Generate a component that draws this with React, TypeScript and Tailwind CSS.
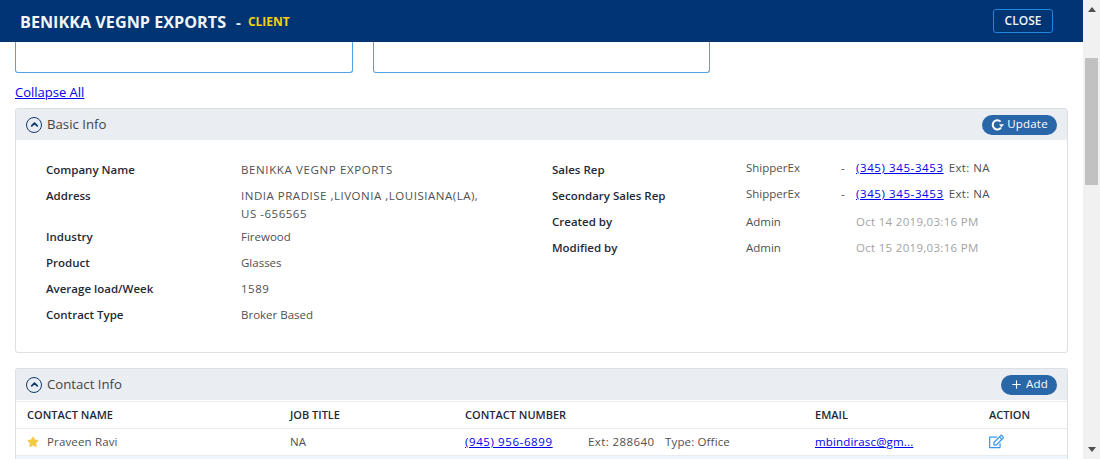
import { ChevronUp, Plus, Star } from "lucide-react";
import { ReactNode } from "react";
import { FaRegEdit } from "react-icons/fa";

const Label = ({ children }: { children: ReactNode }) => (
  <div className="w-[194px] shrink-0 font-semibold text-[#1f2a37]">{children}</div>
);

const Phone = () => (
  <>
    <span className="w-[15px] shrink-0">-</span>
    <a href="#" className="mr-[5px] shrink-0 tracking-[0.6px] text-[#0000ee] underline">
      (345) 345-3453
    </a>
    <span className="tracking-[0.4px]">Ext: NA</span>
  </>
);

const CardHeader = ({ title, action }: { title: string; action: ReactNode }) => (
  <div className="flex h-[31px] items-center justify-between bg-[#eaedf2] pl-[10px] pr-[10px]">
    <div className="flex items-center gap-[5px]">
      <span className="flex h-4 w-4 items-center justify-center rounded-full border-[1.5px] border-[#0f3a6b]">
        <ChevronUp size={11} strokeWidth={4} className="text-[#0f3a6b]" />
      </span>
      <span className="-translate-y-px text-[13.2px] text-[#444]">{title}</span>
    </div>
    {action}
  </div>
);

// open ring with the arrowhead pointing down on its right side
const RedoIcon = () => (
  <svg width="13" height="12" viewBox="0 0 13 12" fill="none">
    <path d="M9.6 2.6A4.6 4.6 0 1 0 10 8.6" stroke="white" strokeWidth="2" />
    <path d="M8 5.2h5L10.5 8.4z" fill="white" />
  </svg>
);

const leftRows = [
  { label: "Company Name", value: "BENIKKA VEGNP EXPORTS", cls: "tracking-[0.62px]" },
  {
    label: "Address",
    value: "INDIA PRADISE ,LIVONIA ,LOUISIANA(LA),\nUS -656565",
    cls: "tracking-[0.52px] mb-[-3px]",
  },
  { label: "Industry", value: "Firewood", cls: "" },
  { label: "Product", value: "Glasses", cls: "" },
  { label: "Average load/Week", value: "1589", cls: "tracking-[0.5px]" },
  { label: "Contract Type", value: "Broker Based", cls: "" },
];

const App = () => {
  return (
    <div className="flex h-[459px] w-[1100px] overflow-hidden bg-white font-['Open_Sans',sans-serif] text-[11.5px] leading-[18px] text-[#505050]">
      <div className="flex w-[1083px] shrink-0 flex-col">
        {/* Header */}
        <header className="flex h-[42px] shrink-0 items-center justify-between bg-[#003473] pl-5 pr-[30px]">
          <div className="flex translate-y-px items-center">
            <h1 className="text-[16.2px] font-bold text-[#f1f4f8]">BENIKKA VEGNP EXPORTS</h1>
            <span className="ml-[10px] text-[15px] font-bold text-[#f1f4f8]">-</span>
            <span className="ml-[7px] text-[12px] font-bold text-[#f5cf10]">CLIENT</span>
          </div>
          <button className="flex h-6 w-[60px] items-center justify-center rounded-[3px] border border-[#1f86e0] text-[12px] font-semibold text-[#f1f4f8]">
            CLOSE
          </button>
        </header>

        <div className="flex flex-col px-[15px]">
          {/* Cut-off boxes */}
          <div className="flex h-[31px] gap-5">
            <div className="w-[338px] rounded-b-[3px] border border-t-0 border-[#4ea3e6]" />
            <div className="w-[337px] rounded-b-[3px] border border-t-0 border-[#4ea3e6]" />
          </div>

          <a href="#" className="mt-[10px] self-start text-[13px] leading-[18px] text-[#0000ee] underline">
            Collapse All
          </a>

          {/* Basic info */}
          <section className="mt-[7px] h-[245px] rounded-[3px] border border-[#dcdfe3]">
            <CardHeader
              title="Basic Info"
              action={
                <button className="flex h-5 w-[75px] items-center justify-center gap-[3px] rounded-full bg-[#2a67a8] text-[11.5px] font-medium tracking-[0.2px] text-white">
                  <RedoIcon />
                  <span className="-translate-y-px">Update</span>
                </button>
              }
            />
            <div className="flex pl-[30px] pt-[21px]">
              <div className="flex w-[506px] shrink-0 flex-col gap-2">
                {leftRows.map((row) => (
                  <div key={row.label} className="flex">
                    <Label>{row.label}</Label>
                    <div className={`whitespace-pre-line pl-px ${row.cls}`}>{row.value}</div>
                  </div>
                ))}
              </div>
              <div className="flex flex-col gap-2">
                <div className="flex">
                  <Label>Sales Rep</Label>
                  <span className="w-[95px] shrink-0 -translate-y-0.5">ShipperEx</span>
                  <span className="flex -translate-y-0.5">
                    <Phone />
                  </span>
                </div>
                <div className="flex">
                  <Label>Secondary Sales Rep</Label>
                  <span className="w-[95px] shrink-0 -translate-y-0.5">ShipperEx</span>
                  <span className="flex -translate-y-0.5">
                    <Phone />
                  </span>
                </div>
                <div className="flex">
                  <Label>Created by</Label>
                  <span className="w-[110px] shrink-0">Admin</span>
                  <span className="tracking-[0.3px] text-[#a3a3a3]">Oct 14 2019,03:16 PM</span>
                </div>
                <div className="flex">
                  <Label>Modified by</Label>
                  <span className="w-[110px] shrink-0">Admin</span>
                  <span className="tracking-[0.3px] text-[#a3a3a3]">Oct 15 2019,03:16 PM</span>
                </div>
              </div>
            </div>
          </section>

          {/* Contact info */}
          <section className="mt-[15px] rounded-t-[3px] border border-b-0 border-[#dcdfe3]">
            <CardHeader
              title="Contact Info"
              action={
                <button className="flex h-5 w-[56px] items-center justify-center gap-[3px] rounded-full bg-[#2a67a8] text-[11.5px] font-medium tracking-[0.2px] text-white">
                  <Plus size={13} strokeWidth={2} />
                  <span className="-translate-y-px">Add</span>
                </button>
              }
            />
            <div className="mt-px flex h-[28px] items-center border-b border-t border-[#e8ebef] pl-[11px] text-[11px] font-semibold text-[#1f2a37]">
              <div className="w-[263px]">CONTACT NAME</div>
              <div className="w-[175px]">JOB TITLE</div>
              <div className="w-[350px]">CONTACT NUMBER</div>
              <div className="w-[174px]">EMAIL</div>
              <div>ACTION</div>
            </div>
            <div className="flex h-[27px] items-center border-b border-[#e8ebef] pl-[11px]">
              <div className="flex w-[263px] items-center gap-2">
                <Star size={12} className="fill-[#f6c945] text-[#f6c945]" />
                <span className="tracking-[0.15px]">Praveen Ravi</span>
              </div>
              <div className="w-[175px]">NA</div>
              <div className="flex w-[350px]">
                <a href="#" className="w-[123px] tracking-[0.6px] text-[#0000ee] underline">
                  (945) 956-6899
                </a>
                <span className="w-[77px] tracking-[0.4px]">Ext: 288640</span>
                <span className="tracking-[0.15px]">Type: Office</span>
              </div>
              <a href="#" className="w-[174px] tracking-[0.15px] text-[#0000ee] underline">
                mbindirasc@gm...
              </a>
              <FaRegEdit size={15} className="-translate-y-px text-[#3b97ee]" />
            </div>
            <div className="h-[3px] bg-[#eef5fb]" />
          </section>
        </div>
      </div>

      {/* Scrollbar */}
      <div className="flex w-[17px] flex-col items-center bg-[#f1f1f1] pt-[7px]">
        <div className="h-0 w-0 border-x-[4px] border-b-[5px] border-x-transparent border-b-[#505050]" />
        <div className="mt-[46px] h-[127px] w-[13px] bg-[#c1c1c1]" />
        <div className="mb-[7px] mt-auto h-0 w-0 border-x-[4px] border-t-[5px] border-x-transparent border-t-[#505050]" />
      </div>
    </div>
  );
};

export default App;
